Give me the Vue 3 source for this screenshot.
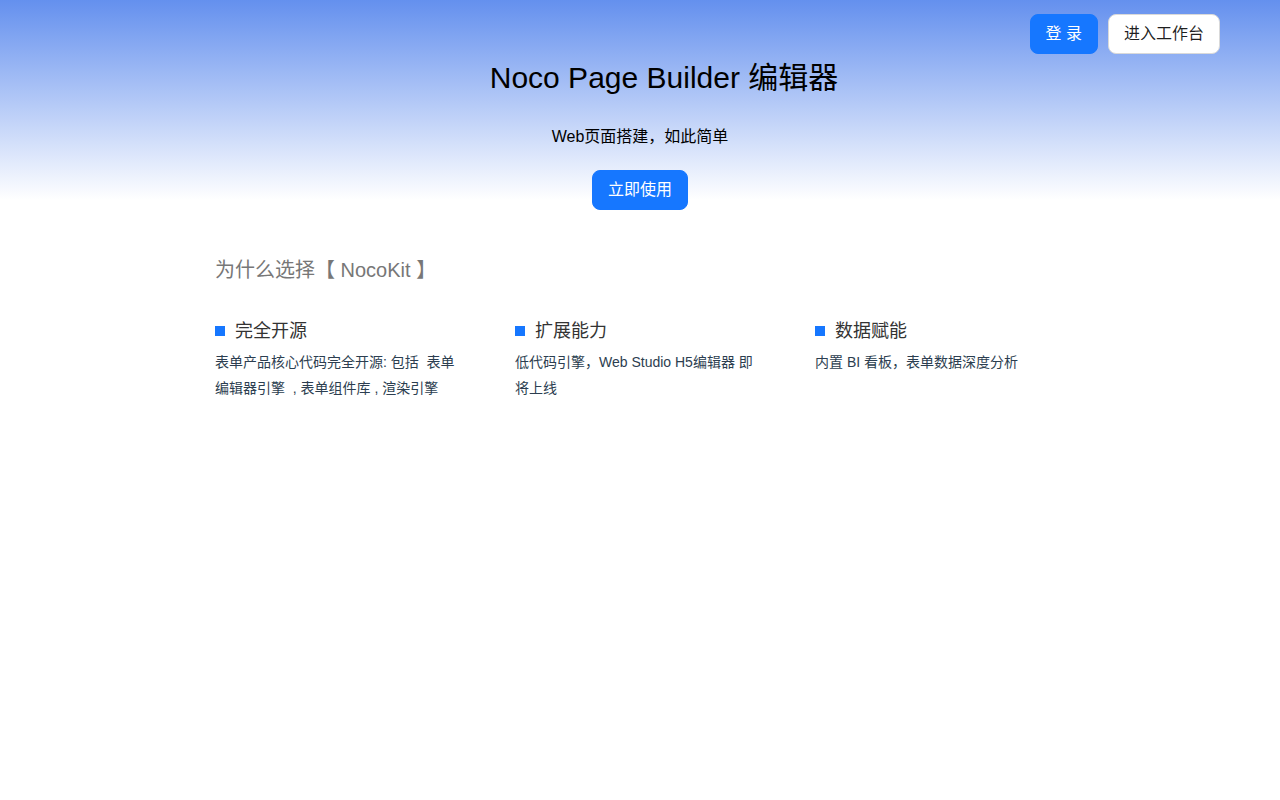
<script setup>
const features = [
  { title: '完全开源', desc: '表单产品核心代码完全开源: 包括\u00a0\u00a0表单编辑器引擎\u00a0\u00a0, 表单组件库 , 渲染引擎' },
  { title: '扩展能力', desc: '低代码引擎，Web Studio H5编辑器 即将上线' },
  { title: '数据赋能', desc: '内置 BI 看板，表单数据深度分析' }
]
</script>

<template>
  <div class="page">
    <header class="hero">
      <div class="actions">
        <button class="btn primary">登 录</button>
        <button class="btn default">进入工作台</button>
      </div>
      <h1 class="title">Noco Page Builder 编辑器</h1>
      <p class="subtitle">Web页面搭建，如此简单</p>
      <button class="btn primary">立即使用</button>
    </header>

    <section class="why">
      <h2 class="why-title">为什么选择【 NocoKit 】</h2>
      <div class="features">
        <div v-for="item in features" :key="item.title" class="feature">
          <div class="feature-head">
            <span class="dot"></span>
            <span class="feature-title">{{ item.title }}</span>
          </div>
          <p class="feature-desc">{{ item.desc }}</p>
        </div>
      </div>
    </section>
  </div>
</template>

<style scoped>
.page {
  min-height: 800px;
  background: #fff;
  font-family: "Liberation Sans", "Noto Sans CJK SC", sans-serif;
}

.hero {
  height: 200px;
  padding: 14px 60px 0;
  box-sizing: border-box;
  display: flex;
  flex-direction: column;
  align-items: center;
  background: linear-gradient(180deg, #6490ee 0%, #ffffff 100%);
}

.actions {
  align-self: flex-end;
  display: flex;
  gap: 10px;
}

.btn {
  height: 40px;
  padding: 0 15px;
  border-radius: 8px;
  font-family: inherit;
  font-size: 16px;
  line-height: 38px;
  box-sizing: border-box;
  cursor: pointer;
}

.primary {
  color: #fff;
  background: #1677ff;
  border: 1px solid #1677ff;
}

.default {
  color: rgba(0, 0, 0, 0.88);
  background: #fff;
  border: 1px solid #d9d9d9;
}

.title {
  margin: 4px 0 0 48px;
  font-size: 30px;
  font-weight: 400;
  line-height: 40px;
  color: #000;
}

.subtitle {
  margin: 27px 0 21px;
  font-size: 16px;
  line-height: 24px;
  color: #000;
}

.why {
  padding: 56px 0 0 215px;
}

.why-title {
  margin: 0;
  font-size: 20px;
  font-weight: 400;
  line-height: 28px;
  color: #777;
}

.features {
  display: flex;
  margin-top: 31px;
}

.feature {
  width: 300px;
}

.feature-head {
  display: flex;
  align-items: center;
  gap: 10px;
  height: 28px;
}

.dot {
  width: 10px;
  height: 10px;
  margin-top: 4px;
  background: #1677ff;
}

.feature-title {
  font-size: 18px;
  color: #333;
}

.feature-desc {
  width: 245px;
  margin: 6px 0 0;
  font-size: 14px;
  line-height: 26px;
  color: #2c3e50;
}
</style>

<style>
html, body {
  margin: 0;
  background: #fff;
}
</style>
